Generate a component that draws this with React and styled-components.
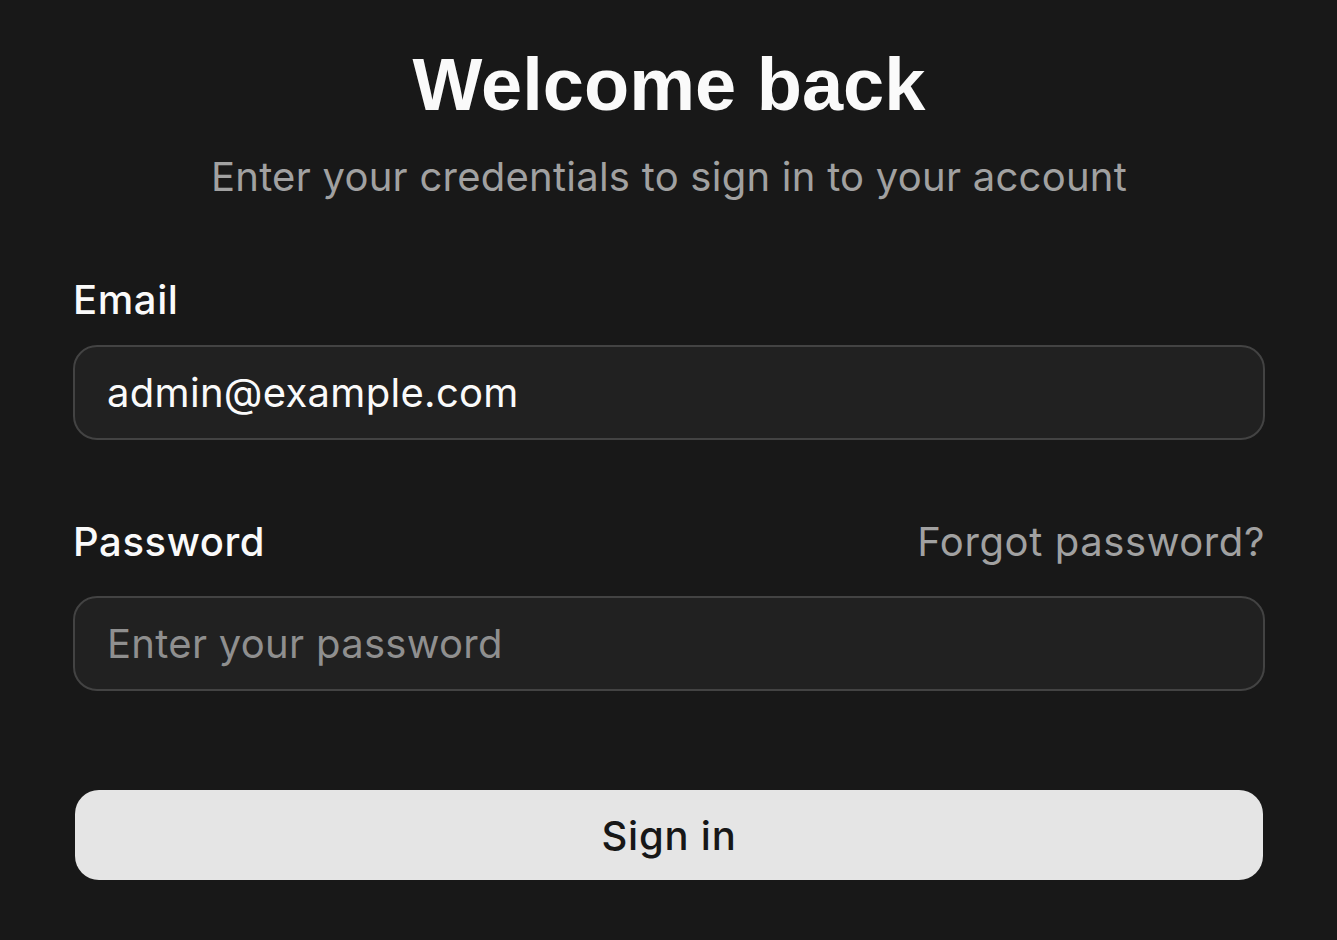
import styled, { createGlobalStyle } from "styled-components"

const Global = createGlobalStyle`
  html, body {
    margin: 0;
    padding: 0;
    background: #181818;
  }
  body {
    font-family: "Inter", "Liberation Sans", sans-serif;
    color: #fafafa;
  }
`

export default function App() {
  return (
    <>
      <Global />
      <Page>
        <Header>
          <Title>Welcome back</Title>
          <Subtitle>Enter your credentials to sign in to your account</Subtitle>
        </Header>
        <Form onSubmit={e => e.preventDefault()}>
          <Field gap={21} after={78}>
            <LabelRow>
              <Label htmlFor="email">Email</Label>
            </LabelRow>
            <Input id="email" type="email" defaultValue="admin@example.com" />
          </Field>
          <Field gap={30} after={99}>
            <LabelRow>
              <Label htmlFor="password">Password</Label>
              <Forgot href="#">Forgot password?</Forgot>
            </LabelRow>
            <Input id="password" type="password" placeholder="Enter your password" />
          </Field>
          <Button type="submit">Sign in</Button>
        </Form>
      </Page>
    </>
  )
}

const Page = styled.div`
  width: 1337px;
  height: 940px;
  box-sizing: border-box;
  padding: 43px 72px 0 73px;
  display: flex;
  flex-direction: column;
`
const Header = styled.div`
  display: flex;
  flex-direction: column;
  align-items: center;
  gap: 26px;
`
const Title = styled.h1`
  margin: 0;
  font-family: "Liberation Sans", Arial, sans-serif;
  font-weight: 700;
  font-size: 74px;
  line-height: 84px;
  color: #fafafa;
`
const Subtitle = styled.p`
  margin: 0;
  font-size: 40px;
  line-height: 48px;
  letter-spacing: 0.25px;
  color: #a1a1a1;
`
const Form = styled.form`
  display: flex;
  flex-direction: column;
  margin-top: 75px;
`
const Field = styled.div`
  display: flex;
  flex-direction: column;
  gap: ${p => p.gap}px;
  margin-bottom: ${p => p.after}px;
`
const LabelRow = styled.div`
  display: flex;
  justify-content: space-between;
  align-items: baseline;
  height: 48px;
`
const Label = styled.label`
  font-size: 40px;
  font-weight: 500;
  line-height: 48px;
  letter-spacing: 0.6px;
  color: #fafafa;
`
const Forgot = styled.a`
  font-size: 40px;
  line-height: 48px;
  letter-spacing: 0.6px;
  color: #a1a1a1;
  text-decoration: none;
`
const Input = styled.input`
  box-sizing: border-box;
  width: 100%;
  height: 95px;
  padding: 0 32px;
  border: 2px solid #434343;
  border-radius: 24px;
  background: #212121;
  color: #fafafa;
  font-family: "Inter", "Liberation Sans", sans-serif;
  font-size: 40px;
  letter-spacing: 0.3px;
  outline: none;
  &::placeholder {
    color: #8f8f8f;
  }
`
const Button = styled.button`
  align-self: center;
  width: 1188px;
  height: 90px;
  border: none;
  border-radius: 24px;
  background: #e5e5e5;
  color: #171717;
  font-family: "Inter", "Liberation Sans", sans-serif;
  font-size: 40px;
  font-weight: 500;
  letter-spacing: 0.8px;
  cursor: pointer;
`
